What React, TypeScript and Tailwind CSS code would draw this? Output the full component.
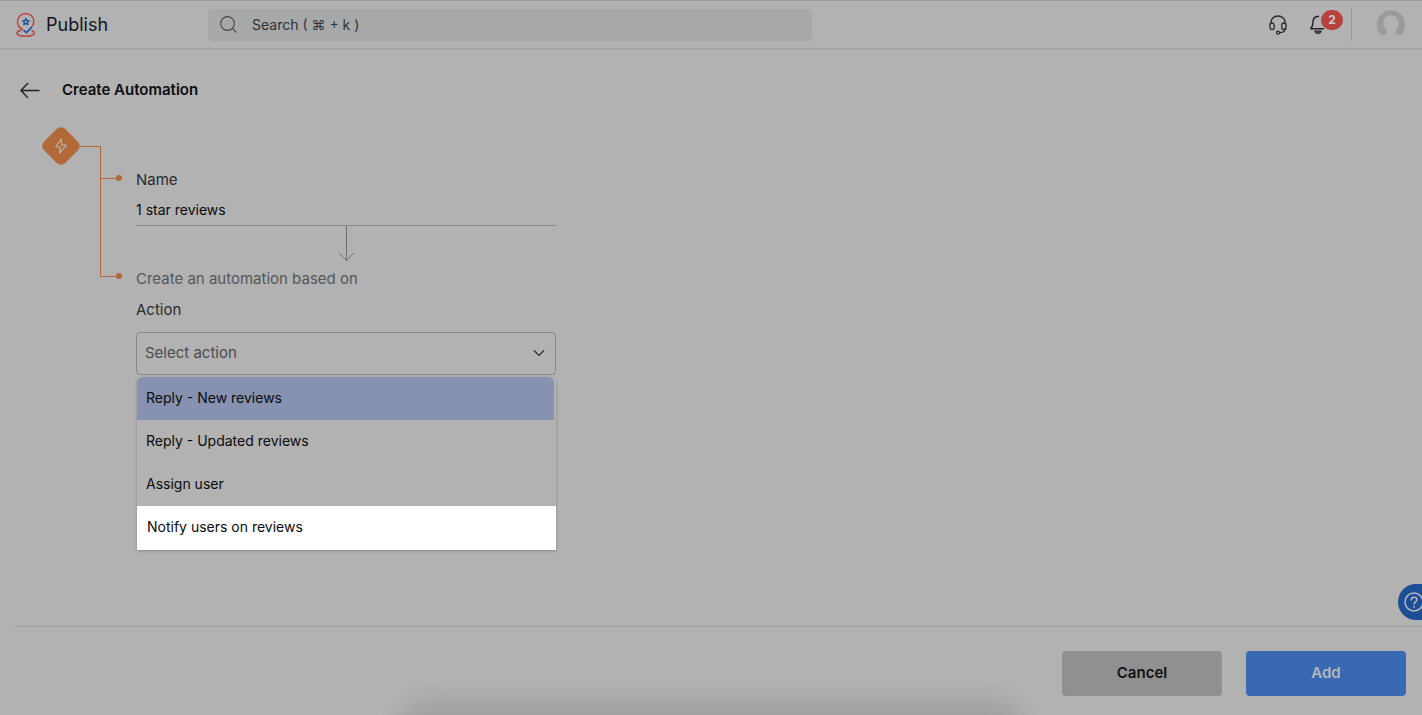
import { useState } from "react";

const actions = ["Reply - New reviews", "Reply - Updated reviews", "Assign user"];

function Logo() {
  return (
    <svg className="h-[26px] w-5 shrink-0" viewBox="0 0 20 26" fill="none" aria-hidden="true">
      <path
        d="M6.6 17.4C3.6 16 1.5 13.2 1.5 9.6C1.5 4.9 5.3 1.4 9.6 1.4C14.2 1.4 17.8 4.9 17.8 9.3C17.8 11.2 17.2 12.6 16.400 13.800"
        stroke="#b8443f"
        strokeWidth="1.5"
        strokeLinecap="round"
      />
      <path
        d="M5 18.3C2.8 18.8 1 19.7 1 21.1C1 23.2 4.9 24.3 9.6 24.3C14.4 24.3 18.2 23.2 18.2 21.1C18.2 19.9 17.2 19.2 15.9 18.7"
        stroke="#b8443f"
        strokeWidth="1.5"
        strokeLinecap="round"
      />
      <path
        d="M9.9 6.5L10.800 8.500L13 8.800L11.400 10.300L11.800 12.500L9.900 11.400L8 12.500L8.400 10.300L6.800 8.800L9 8.500Z"
        stroke="#1e56a6"
        strokeWidth="1.5"
        strokeLinejoin="round"
      />
      <path d="M8 18.700L10.400 20.700L15.700 15.200" stroke="#1e56a6" strokeWidth="1.7" strokeLinecap="round" strokeLinejoin="round" />
    </svg>
  );
}

function Header() {
  return (
    <header className="flex h-[50px] shrink-0 items-center border-t border-b-2 border-t-[#9b9b9b] border-b-[#a6a6a6] pr-4 pl-4">
      <a href="#home" className="flex w-48 shrink-0 items-center gap-[10px]">
        <Logo />
        <span className="text-[18px] leading-6 text-[#131417]">Publish</span>
      </a>
      <div className="flex h-8 w-full max-w-[604px] items-center gap-[15px] rounded-sm bg-[#a7a8aa] pl-3">
        <svg className="size-[17px] shrink-0" viewBox="0 0 17 17" fill="none" stroke="#46484b" strokeWidth="1.2" strokeLinecap="round" aria-hidden="true">
          <circle cx="7.5" cy="7.5" r="6.8" />
          <path d="M12.4 12.4L16 16" />
        </svg>
        <input
          type="search"
          aria-label="Search"
          placeholder="Search ( ⌘ + k )"
          className="h-8 min-w-0 flex-1 bg-transparent text-sm text-[#303235] outline-none placeholder:text-[#303235]"
        />
      </div>
      <div className="ml-auto flex shrink-0 items-center">
        <button type="button" aria-label="Support" className="block">
          <svg className="h-5 w-[18px]" viewBox="0 0 18 20" fill="none" stroke="#2a2c33" strokeWidth="1.3" strokeLinecap="round" aria-hidden="true">
            <path d="M1.9 8.6V7.6C1.9 3.6 5 1 9 1C13 1 16.1 3.6 16.1 7.6V8.6" />
            <rect x="1" y="8" width="4.2" height="6.6" rx="2.1" />
            <rect x="12.8" y="8" width="4.2" height="6.6" rx="2.1" />
            <path d="M16.2 13.4C16.2 16 14 17.4 10.8 17.6" />
            <circle cx="9" cy="17.7" r="1.5" />
          </svg>
        </button>
        <button type="button" aria-label="Notifications, 2 unread" className="relative ml-[23px] block">
          <svg className="h-5 w-4" viewBox="0 0 16 20" fill="none" stroke="#1f2126" strokeWidth="1.4" strokeLinecap="round" strokeLinejoin="round" aria-hidden="true">
            <path d="M8.500 1.300C5.100 1.500 3 3.900 3 7C3 11 2.200 12 .8 13.700H13.500" />
            <path d="M5.200 16.100H10.800C10.500 17.400 9.400 18.300 8 18.300C6.600 18.300 5.500 17.400 5.200 16.100Z" />
          </svg>
          <span className="absolute -top-[5px] left-[11px] flex h-5 w-[22px] items-center justify-center rounded-full bg-[#b8423f] text-[12px] font-bold text-[#c9c9c9]">
            2
          </span>
        </button>
        <span className="ml-[25px] h-[33px] w-px bg-[#9c9c9c]" />
        <button type="button" aria-label="Account" className="mb-[3px] ml-6 block">
          <svg className="h-7 w-[30px]" viewBox="0 0 30 28" aria-hidden="true">
            <path
              d="M4.200 25.300C2.200 22.700 .9 19.400 .9 15.400C.9 7.500 7.200 1.300 15 1.300C22.800 1.300 29.100 7.500 29.100 15.400C29.100 19.400 27.800 22.700 25.800 25.300C24 26.500 20.700 25.800 19.300 24.500C18.900 23.500 19 22.600 19.500 21.800C21.500 19.800 22.500 16.800 22.500 14C22.500 9.300 19.300 6.300 15 6.300C10.700 6.300 7.500 9.300 7.500 14C7.500 16.800 8.500 19.800 10.500 21.800C11 22.600 11.100 23.500 10.700 24.500C9.300 25.800 6 26.500 4.200 25.300Z"
              fill="#999b9e"
            />
          </svg>
        </button>
      </div>
    </header>
  );
}

function FlowLines() {
  return (
    <svg className="h-[156px] w-[94px] shrink-0" viewBox="0 0 94 156" fill="none" aria-hidden="true">
      <path d="M38 20.500H58.500V150.500H76M58.500 52.500H76" stroke="#b06937" />
      <circle cx="77" cy="52" r="3" fill="#b06937" />
      <circle cx="77" cy="150" r="3" fill="#b06937" />
      <rect x="4" y="5" width="30" height="30" rx="6" transform="rotate(45 19 20)" fill="#b06937" />
      <path
        d="M19.300 13.200L13.600 20.800H18L17.700 27L24.400 19.200H19.700Z"
        stroke="#b8b0aa"
        strokeWidth="1.3"
        strokeLinejoin="round"
      />
    </svg>
  );
}

function AutomationForm() {
  const [name, setName] = useState("1 star reviews");
  return (
    <form className="flex w-full max-w-[420px] flex-col pt-11">
      <label htmlFor="name" className="leading-5 text-[#2a2b2f]">
        Name
      </label>
      <input
        id="name"
        value={name}
        onChange={(e) => setName(e.target.value)}
        className="mt-1 h-8 w-full border-b border-[#88898b] bg-transparent text-sm text-[#0b0b0c] outline-none"
      />
      <svg className="h-9 w-4 self-center" viewBox="0 0 16 36" fill="none" stroke="#6d6e73" aria-hidden="true">
        <path d="M8.500 0V34.500M1 27L8.500 34.500L16 27" />
      </svg>
      <p className="mt-[7px] leading-5 text-[#55575a]">Create an automation based on</p>
      <label htmlFor="action" className="mt-[11px] leading-5 text-[#2a2b2f]">
        Action
      </label>
      <div className="relative mt-3">
        <select
          id="action"
          defaultValue=""
          className="block h-[43px] w-full appearance-none rounded border border-[#87888a] bg-transparent px-2 text-[#4b4d50] outline-none"
        >
          <option value="">Select action</option>
        </select>
        <svg className="pointer-events-none absolute top-[17px] right-[11px] h-2 w-3" viewBox="0 0 12 8" fill="none" stroke="#2b2d30" strokeWidth="1.200" aria-hidden="true">
          <path d="M1 1.500L6 6.500L11 1.500" />
        </svg>
        <ul
          role="listbox"
          aria-label="Actions"
          className="absolute top-full right-0 left-px mt-[2px] rounded-t-md bg-[#b2b2b2] text-sm text-[#0a0b0c] shadow-[0_1px_3px_#00000040]"
        >
          {actions.map((action, i) => (
            <li
              key={action}
              role="option"
              aria-selected={i === 0}
              className={
                i === 0
                  ? "mr-[2px] flex h-[43px] items-center rounded-t-md bg-[#8791b0] px-[9px] pb-[2px]"
                  : "flex h-[43px] items-center px-[9px] pb-[2px]"
              }
            >
              {action}
            </li>
          ))}
          <li role="option" aria-selected={false} className="flex h-11 items-center bg-white px-[10px] pb-[2px]">
            Notify users on reviews
          </li>
        </ul>
      </div>
    </form>
  );
}

export default function App() {
  return (
    <div className="relative flex min-h-screen flex-col overflow-hidden bg-[#b2b2b2] font-['Inter','Liberation_Sans',sans-serif] text-[15px]">
      <Header />
      <main className="flex-1">
        <div className="flex items-center gap-[22px] pt-[30px] pl-5">
          <a href="#back" aria-label="Back">
            <svg className="h-4 w-5" viewBox="0 0 20 16" fill="none" stroke="#1f2023" strokeWidth="1.400" aria-hidden="true">
              <path d="M19.500 8.500H1M8 1L1 8.500L8 16" />
            </svg>
          </a>
          <h1 className="leading-5 font-semibold text-[#0d0e10]">Create Automation</h1>
        </div>
        <div className="flex pt-[26px] pl-[42px]">
          <FlowLines />
          <AutomationForm />
        </div>
      </main>
      <footer className="ml-[14px] flex justify-end gap-6 border-t border-[#a0a0a0] pt-6 pr-4 pb-[19px]">
        <button type="button" className="h-[45px] w-40 rounded bg-[#909090] font-semibold text-[#101114]">
          Cancel
        </button>
        <button type="button" className="h-[45px] w-40 rounded bg-[#3a69b3] font-semibold text-[#b4b7bc]">
          Add
        </button>
      </footer>
      <div className="pointer-events-none absolute inset-x-0 bottom-0 flex h-10 items-end justify-center overflow-hidden" aria-hidden="true">
        <div className="-mb-20 h-20 w-[600px] rounded-[20px] shadow-[0_0_22px_16px_#00000018]" />
      </div>
      <button type="button" aria-label="Help" className="absolute right-0 bottom-[95px] h-9 w-6 overflow-hidden rounded-l-full bg-[#1d4f97] pl-[6px]">
        <svg className="h-5 w-5 max-w-none" viewBox="0 0 20 20" fill="none" stroke="#b2b6bd" strokeWidth="1.500" strokeLinecap="round" aria-hidden="true">
          <circle cx="10" cy="10" r="9" />
          <path d="M7.300 8C7.300 6.300 8.500 5.300 10.100 5.300C11.700 5.300 12.900 6.300 12.900 7.800C12.900 9.800 10.100 9.900 10.100 12" />
          <path d="M10.100 14.700V14.800" strokeWidth="1.900" />
        </svg>
      </button>
    </div>
  );
}
